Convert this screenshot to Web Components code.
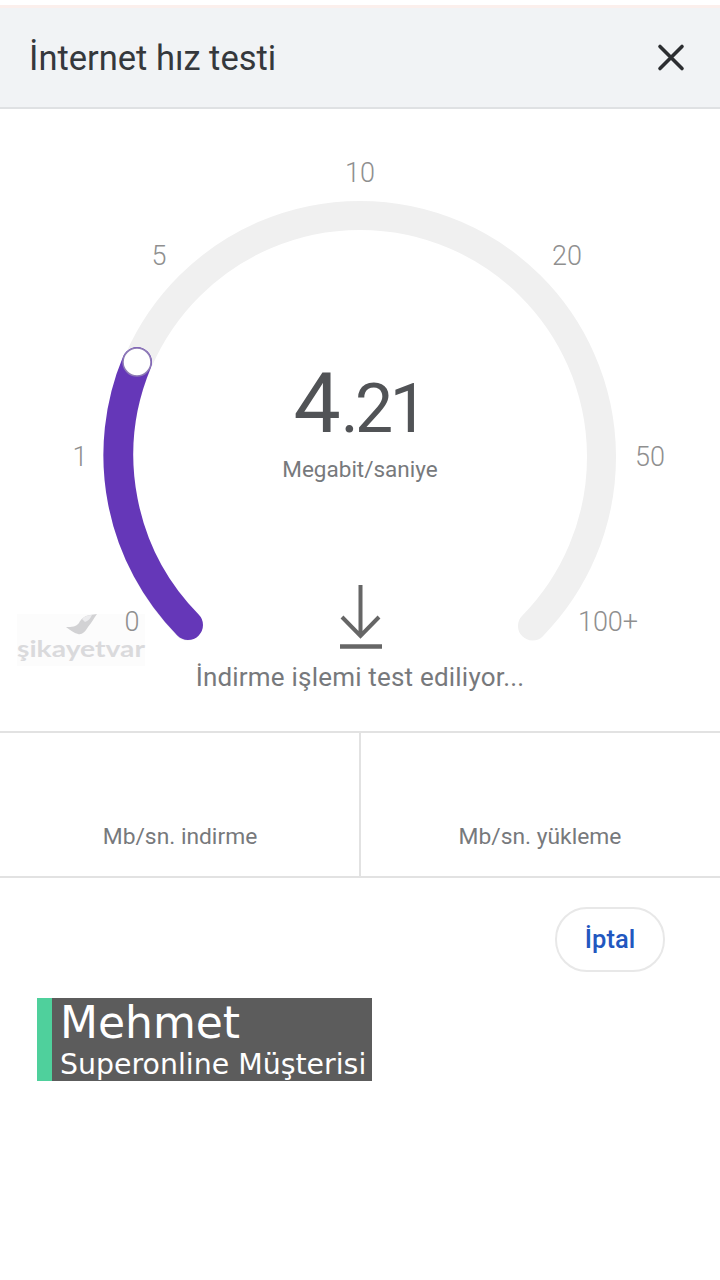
<!DOCTYPE html>
<html lang="tr">
<head>
<meta charset="utf-8">
<title>İnternet hız testi</title>
<style>
  html, body { margin: 0; background: #fff; }
  body { width: 720px; height: 1280px; overflow: hidden; font-family: Roboto, "Liberation Sans", sans-serif; }
</style>
</head>
<body>
<speed-dialog>
  <dialog-header slot="header" title-text="İnternet hız testi"></dialog-header>
  <speed-gauge slot="gauge"></speed-gauge>
  <stat-row slot="stats">
    <stat-cell>Mb/sn. indirme</stat-cell>
    <stat-cell>Mb/sn. yükleme</stat-cell>
  </stat-row>
  <pill-button slot="action">İptal</pill-button>
</speed-dialog>
<name-caption name="Mehmet" note="Superonline Müşterisi"></name-caption>

<script>
class SpeedDialog extends HTMLElement {
    constructor() {
        super();
        this.attachShadow({ mode: 'open' });
        this.shadowRoot.innerHTML = `
            <style>
                :host { display: block; }
                .strip { height: 5px; background: #fff; border-bottom: 3px solid #fbefec; }
                .action { display: flex; justify-content: flex-end; padding: 29px 55px 0 0; }
            </style>
            <div class="strip"></div>
            <slot name="header"></slot>
            <slot name="gauge"></slot>
            <slot name="stats"></slot>
            <div class="action"><slot name="action"></slot></div>
        `;
    }
}

class DialogHeader extends HTMLElement {
    constructor() {
        super();
        this.attachShadow({ mode: 'open' });
    }
    connectedCallback() {
        this.shadowRoot.innerHTML = `
            <style>
                :host {
                    display: flex;
                    align-items: center;
                    justify-content: space-between;
                    box-sizing: border-box;
                    height: 101px;
                    padding: 0 34px 0 29px;
                    background: #f1f3f5;
                    border-bottom: 2px solid #dfe1e3;
                }
                h1 {
                    margin: 0;
                    font: 400 34.5px Roboto, sans-serif;
                    color: #35383c;
                }
                svg { display: block; }
            </style>
            <h1>${this.getAttribute('title-text')}</h1>
            <svg width="30" height="30" viewBox="0 0 30 30">
                <path d="M4 3.5 L26 25.5 M26 3.5 L4 25.5" stroke="#2c2e31" stroke-width="3.6" fill="none" stroke-linecap="round"/>
            </svg>
        `;
    }
}

class SpeedGauge extends HTMLElement {
    constructor() {
        super();
        this.attachShadow({ mode: 'open' });
        const ticks = [
            ['10', 360, 182], ['5', 159, 265], ['20', 567, 265],
            ['1', 80, 466], ['50', 650, 466], ['0', 132, 631], ['100+', 608, 631]
        ];
        // svg is offset by the header, so y values below are page y minus 109
        const labels = ticks.map(([t, x, y]) => `<text class="tick" x="${x}" y="${y - 109}">${t}</text>`).join('');
        this.shadowRoot.innerHTML = `
            <style>
                :host { display: block; height: 622px; }
                svg { display: block; }
                text { font-family: Roboto, sans-serif; text-anchor: middle; }
                .tick { font-size: 27px; font-weight: 300; fill: #8f8f8f; }
                .value { fill: #515356; }
                .unit { font-size: 22.5px; fill: #77797c; }
                .status { font-size: 26px; fill: #77797c; letter-spacing: .2px; }
                .mark { font-family: Lato, sans-serif; font-size: 22px; fill: #dadadc; font-weight: 700; }
            </style>
            <svg width="720" height="622" viewBox="0 0 720 622">
                <rect x="17" y="505" width="128" height="52" fill="#fcfcfc"/>
                <path d="M187.5 517 A241.5 241.5 0 1 1 532.5 517" fill="none" stroke="#f0f0f0" stroke-width="29" stroke-linecap="round"/>
                <path d="M188 516 A242 242 0 0 1 137 253" fill="none" stroke="#6537b8" stroke-width="30" stroke-linecap="round"/>
                <circle cx="137" cy="253" r="14" fill="#fff" stroke="#8d7ab5" stroke-width="1.5"/>
                ${labels}
                <text class="value" x="359" y="323"><tspan font-size="84">4</tspan><tspan font-size="68" letter-spacing="-3.5">.21</tspan></text>
                <text class="unit" x="360" y="368">Megabit/saniye</text>
                <path d="M360.5 476 V526 M342 508 L360.5 527 L379 508" fill="none" stroke="#666" stroke-width="4"/>
                <path d="M340 537.5 H382" fill="none" stroke="#666" stroke-width="4.5"/>
                <text class="status" x="360" y="577">İndirme işlemi test ediliyor...</text>
                <path d="M66 518 C72 518 76 518 79 514 C81 510 84 507 90 506 L97 505 C94 509 92 513 88 518 C85 523 82 526 78 525 C74 524 70 521 66 518 Z" fill="#d2d2d4"/>
                <path d="M82 510 C85 507 88 506 92 506 C90 510 88 512 85 513 Z" fill="#ececee"/>
                <text class="mark" x="81" y="548" textLength="128" lengthAdjust="spacingAndGlyphs">şikayetvar</text>
            </svg>
        `;
    }
}

class StatRow extends HTMLElement {
    constructor() {
        super();
        this.attachShadow({ mode: 'open' });
        this.shadowRoot.innerHTML = `
            <style>
                :host {
                    display: grid;
                    grid-template-columns: 1fr 1fr;
                    box-sizing: border-box;
                    height: 147px;
                    border-top: 2px solid #e2e2e2;
                    border-bottom: 2px solid #e2e2e2;
                }
            </style>
            <slot></slot>
        `;
    }
}

class StatCell extends HTMLElement {
    constructor() {
        super();
        this.attachShadow({ mode: 'open' });
        this.shadowRoot.innerHTML = `
            <style>
                :host {
                    display: flex;
                    align-items: flex-end;
                    justify-content: center;
                    padding-bottom: 26px;
                    font: 400 22.8px Roboto, sans-serif;
                    color: #77797c;
                    box-shadow: inset 1px 0 0 #e2e2e2;
                }
                :host(:first-child) { box-shadow: inset -1px 0 0 #e2e2e2; }
            </style>
            <slot></slot>
        `;
    }
}

class PillButton extends HTMLElement {
    constructor() {
        super();
        this.attachShadow({ mode: 'open' });
        this.shadowRoot.innerHTML = `
            <style>
                :host {
                    display: flex;
                    align-items: center;
                    justify-content: center;
                    box-sizing: border-box;
                    width: 110px;
                    height: 65px;
                    padding-bottom: 2px;
                    border: 2px solid #e8e8e8;
                    border-radius: 32px;
                    font: 500 25.5px Roboto, sans-serif;
                    color: #2257bf;
                }
            </style>
            <slot></slot>
        `;
    }
}

class NameCaption extends HTMLElement {
    constructor() {
        super();
        this.attachShadow({ mode: 'open' });
    }
    connectedCallback() {
        this.shadowRoot.innerHTML = `
            <style>
                :host {
                    display: block;
                    width: 335px;
                    margin: 26px 0 0 37px;
                    box-sizing: border-box;
                    height: 83px;
                    padding: 0 0 0 8px;
                    background: #5c5c5c;
                    border-left: 15px solid #4fd09c;
                    color: #fff;
                    font-family: "DejaVu Sans", sans-serif;
                    overflow: hidden;
                    white-space: nowrap;
                }
                .name { font-size: 44px; line-height: 50px; }
                .note { font-size: 28.4px; line-height: 33px; }
            </style>
            <div class="name">${this.getAttribute('name')}</div>
            <div class="note">${this.getAttribute('note')}</div>
        `;
    }
}

customElements.define('speed-dialog', SpeedDialog);
customElements.define('dialog-header', DialogHeader);
customElements.define('speed-gauge', SpeedGauge);
customElements.define('stat-row', StatRow);
customElements.define('stat-cell', StatCell);
customElements.define('pill-button', PillButton);
customElements.define('name-caption', NameCaption);
</script>
</body>
</html>
